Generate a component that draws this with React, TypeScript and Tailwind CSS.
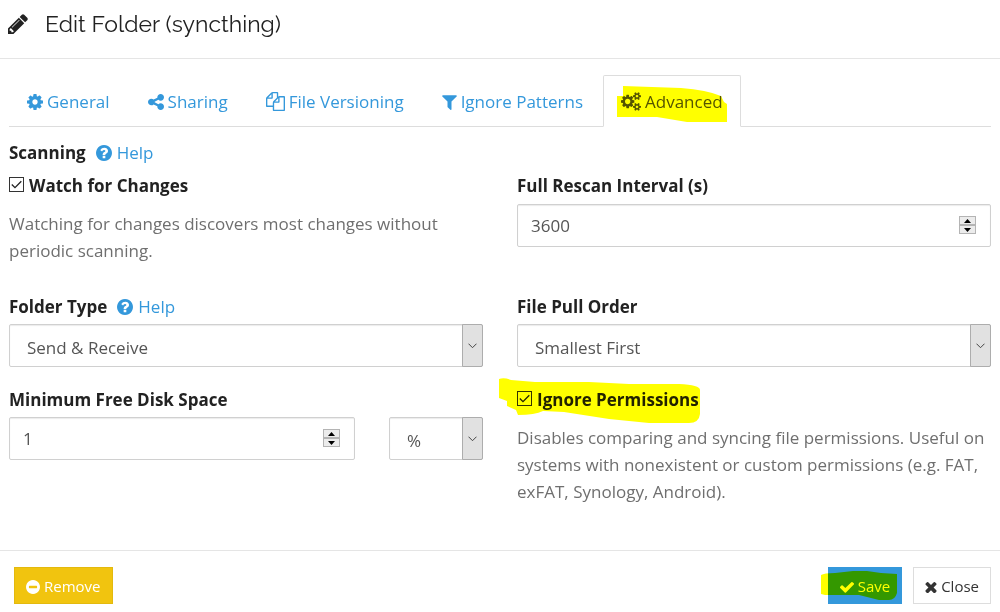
import { useState } from "react";
import type { ReactNode } from "react";

const icons = {
  pencil:
    "M491 1536l91-91-235-235-91 91v107h128v128h107zm523-928q0-22-22-22-10 0-17 7l-542 542q-7 7-7 17 0 22 22 22 10 0 17-7l542-542q7-7 7-17zm-54-192l416 416-832 832h-416v-416zm683 96q0 53-37 90l-166 166-416-416 166-165q36-38 90-38 53 0 91 38l235 234q37 39 37 91z",
  cog: "M1152 896q0-106-75-181t-181-75-181 75-75 181 75 181 181 75 181-75 75-181zm512-109v222q0 12-8 23t-20 13l-185 28q-19 54-39 91 35 50 107 138 10 12 10 25t-9 23q-27 37-99 108t-94 71q-12 0-26-9l-138-108q-44 23-91 38-16 136-29 186-7 28-36 28h-222q-14 0-24.5-8.5t-11.5-21.5l-28-184q-49-16-90-37l-141 107q-10 9-25 9-14 0-25-11-126-114-165-168-7-10-7-23 0-12 8-23 15-21 51-66.5t54-70.5q-27-50-41-99l-183-27q-13-2-21-12.5t-8-23.5v-222q0-12 8-23t19-13l186-28q14-46 39-92-40-57-107-138-10-12-10-24 0-10 9-23 26-36 98.5-107.5t94.5-71.5q13 0 26 10l138 107q44-23 91-38 16-136 29-186 7-28 36-28h222q14 0 24.5 8.5t11.5 21.5l28 184q49 16 90 37l142-107q9-9 24-9 13 0 25 10 129 119 165 170 7 8 7 22 0 12-8 23-15 21-51 66.5t-54 70.5q26 50 41 98l183 28q13 2 21 12.5t8 23.5z",
  share:
    "M1344 1024q133 0 226.5 93.5t93.5 226.5-93.5 226.5-226.5 93.5-226.5-93.5-93.5-226.5q0-12 2-34l-360-180q-92 86-218 86-133 0-226.5-93.5t-93.5-226.5 93.5-226.5 226.5-93.5q126 0 218 86l360-180q-2-22-2-34 0-133 93.5-226.5t226.5-93.5 226.5 93.5 93.5 226.5-93.5 226.5-226.5 93.5q-126 0-218-86l-360 180q2 22 2 34t-2 34l360 180q92-86 218-86z",
  files:
    "M1696 384q40 0 68 28t28 68v1216q0 40-28 68t-68 28h-960q-40 0-68-28t-28-68v-288h-544q-40 0-68-28t-28-68v-672q0-40 20-88t48-76l408-408q28-28 76-48t88-20h416q40 0 68 28t28 68v328q68-40 128-40h416zm-544 213l-299 299h299v-299zm-640-384l-299 299h299v-299zm196 647l316-316v-416h-384v416q0 40-28 68t-68 28h-416v640h512v-256q0-40 20-88t48-76zm956 804v-1152h-384v416q0 40-28 68t-68 28h-416v640h896z",
  filter:
    "M1595 295q17 41-14 70l-493 493v742q0 42-39 59-13 5-25 5-27 0-45-19l-256-256q-19-19-19-45v-486l-493-493q-31-29-14-70 17-39 59-39h1280q42 0 59 39z",
  cogs: "M896 896q0-106-75-181t-181-75-181 75-75 181 75 181 181 75 181-75 75-181zm768 512q0-52-38-90t-90-38-90 38-38 90q0 53 37.5 90.5t90.5 37.5 90.5-37.5 37.5-90.5zm0-1024q0-52-38-90t-90-38-90 38-38 90q0 53 37.5 90.5t90.5 37.5 90.5-37.5 37.5-90.5zm-384 421v185q0 10-7 19.5t-16 10.5l-155 24q-11 35-32 76 34 48 90 115 7 11 7 20 0 12-7 19-23 30-82.5 89.5t-78.5 59.5q-11 0-21-7l-115-90q-37 19-77 31-11 108-23 155-7 24-30 24h-186q-11 0-20-7.5t-10-17.5l-23-153q-34-10-75-31l-118 89q-7 7-20 7-11 0-21-8-144-133-144-160 0-9 7-19 10-14 41-53t47-61q-23-44-35-82l-152-24q-10-1-17-9.5t-7-19.5v-185q0-10 7-19.5t16-10.5l155-24q11-35 32-76-34-48-90-115-7-11-7-20 0-12 7-20 22-30 82-89t79-59q11 0 21 7l115 90q34-18 77-32 11-108 23-154 7-24 30-24h186q11 0 20 7.5t10 17.5l23 153q34 10 75 31l118-89q8-7 20-7 11 0 21 8 144 133 144 160 0 8-7 19-12 16-42 54t-45 60q23 48 34 82l152 23q10 2 17 10.5t7 19.5zm640 533v140q0 16-149 31-12 27-30 52 51 113 51 138 0 4-4 7-122 71-124 71-8 0-46-47t-52-68q-20 2-30 2t-30-2q-14 21-52 68t-46 47q-2 0-124-71-4-3-4-7 0-25 51-138-18-25-30-52-149-15-149-31v-140q0-16 149-31 13-29 30-52-51-113-51-138 0-4 4-7 4-2 35-20t59-34 30-16q8 0 46 46.5t52 67.5q20-2 30-2t30 2q51-71 92-112l6-2q4 0 124 70 4 3 4 7 0 25-51 138 17 23 30 52 149 15 149 31zm0-1024v140q0 16-149 31-12 27-30 52 51 113 51 138 0 4-4 7-122 71-124 71-8 0-46-47t-52-68q-20 2-30 2t-30-2q-14 21-52 68t-46 47q-2 0-124-71-4-3-4-7 0-25 51-138-18-25-30-52-149-15-149-31v-140q0-16 149-31 13-29 30-52-51-113-51-138 0-4 4-7 4-2 35-20t59-34 30-16q8 0 46 46.5t52 67.5q20-2 30-2t30 2q51-71 92-112l6-2q4 0 124 70 4 3 4 7 0 25-51 138 17 23 30 52 149 15 149 31z",
  question:
    "M1024 1376v-192q0-14-9-23t-23-9h-192q-14 0-23 9t-9 23v192q0 14 9 23t23 9h192q14 0 23-9t9-23zm256-672q0-88-55.5-163t-138.5-116-170-41q-243 0-371 213-15 24 8 42l132 100q7 6 19 6 16 0 25-12 53-68 86-92 34-24 86-24 48 0 85.5 26t37.5 59q0 38-20 61t-68 45q-63 28-115.5 86.5t-52.5 125.5v36q0 14 9 23t23 9h192q14 0 23-9t9-23q0-19 21.5-49.5t54.5-49.5q32-18 49-28.5t46-35 44.5-48 28-60.5 12.5-81zm384 192q0 209-103 385.5t-279.5 279.5-385.5 103-385.5-103-279.5-279.5-103-385.5 103-385.5 279.5-279.5 385.5-103 385.5 103 279.5 279.5 103 385.5z",
  minus:
    "M1344 960v-128q0-26-19-45t-45-19h-768q-26 0-45 19t-19 45v128q0 26 19 45t45 19h768q26 0 45-19t19-45zm320-64q0 209-103 385.5t-279.5 279.5-385.5 103-385.5-103-279.5-279.5-103-385.5 103-385.5 279.5-279.5 385.5-103 385.5 103 279.5 279.5 103 385.5z",
  check:
    "M1671 566q0 40-28 68l-724 724-136 136q-28 28-68 28t-68-28l-136-136-362-362q-28-28-28-68t28-68l136-136q28-28 68-28t68 28l294 295 656-657q28-28 68-28t68 28l136 136q28 28 28 68z",
  times:
    "M1490 1322q0 40-28 68l-136 136q-28 28-68 28t-68-28l-294-294-294 294q-28 28-68 28t-68-28l-136-136q-28-28-28-68t28-68l294-294-294-294q-28-28-28-68t28-68l136-136q28-28 68-28t68 28l294 294 294-294q28-28 68-28t68 28l136 136q28 28 28 68t-28 68l-294 294 294 294q28 28 28 68z",
};

interface IconProps {
  name: keyof typeof icons;
  box?: string;
  className: string;
}

function Icon({ name, box = "128 128 1536 1536", className }: IconProps) {
  return (
    <svg
      viewBox={box}
      fill="currentColor"
      aria-hidden="true"
      className={"shrink-0 " + className}
    >
      <path d={icons[name]} />
    </svg>
  );
}

// marker pen stroke laid over the text of its parent
function Marker({
  points,
  className,
}: {
  points: string;
  className: string;
}) {
  return (
    <svg
      aria-hidden="true"
      className={
        "pointer-events-none absolute overflow-visible mix-blend-multiply " +
        className
      }
    >
      <path d={points} fill="#ffff00" />
    </svg>
  );
}

function HelpLink() {
  return (
    <a href="#help" className="flex items-center gap-[5px] text-[#3498db]">
      <Icon name="question" className="size-4" />
      Help
    </a>
  );
}

function NumberField({
  id,
  value,
  onChange,
}: {
  id: string;
  value: number;
  onChange: (value: number) => void;
}) {
  return (
    <div className="relative flex-1">
      <input
        id={id}
        type="number"
        value={value}
        onChange={(e) => onChange(Number(e.target.value))}
        className="block h-[43px] w-full appearance-none rounded-xs border border-[#d0d0d0] bg-white px-[13px] text-[#555] shadow-[inset_0_1px_1px_rgba(0,0,0,0.08)] outline-none [appearance:textfield] [&::-webkit-inner-spin-button]:appearance-none"
      />
      <div className="absolute top-[12px] right-[15px] flex flex-col">
        <button
          type="button"
          aria-label="Increase"
          onClick={() => onChange(value + 1)}
          className="flex h-[9px] w-[17px] items-center justify-center border border-[#b4b4b4] bg-[#ececec]"
        >
          <svg viewBox="0 0 7 4" className="h-1 w-[7px]">
            <path d="M0 4L3.500 0L7 4z" />
          </svg>
        </button>
        <button
          type="button"
          aria-label="Decrease"
          onClick={() => onChange(value - 1)}
          className="flex h-[9px] w-[17px] items-center justify-center border border-[#b4b4b4] bg-[#ececec]"
        >
          <svg viewBox="0 0 7 4" className="h-1 w-[7px]">
            <path d="M0 0L3.500 4L7 0z" />
          </svg>
        </button>
      </div>
    </div>
  );
}

function SelectField({
  id,
  label,
  options,
  className = "w-full",
}: {
  id: string;
  label?: string;
  options: string[];
  className?: string;
}) {
  return (
    <div className={"relative " + className}>
      <select
        id={id}
        aria-label={label}
        className="block h-[43px] w-full appearance-none rounded-xs border border-[#d0d0d0] bg-white pt-[3px] pr-5 pl-[17px] text-[#555] shadow-[inset_0_1px_1px_rgba(0,0,0,0.08)] outline-none"
      >
        {options.map((option) => (
          <option key={option}>{option}</option>
        ))}
      </select>
      <span className="pointer-events-none absolute inset-y-0 right-0 flex w-[21px] items-center justify-center rounded-r-xs border border-[#adadad] bg-[#e1e1e1]">
        <svg
          viewBox="0 0 9 6"
          fill="none"
          stroke="#444"
          className="h-[6px] w-[9px]"
        >
          <path d="M0.500 0.700L4.500 4.700L8.500 0.700" />
        </svg>
      </span>
    </div>
  );
}

function CheckField({
  id,
  children,
}: {
  id: string;
  children: ReactNode;
}) {
  const [checked, setChecked] = useState(true);

  return (
    <div className="flex h-[27px] items-start gap-[5px]">
      <span className="relative mt-[5px] size-[15px]">
        <input
          id={id}
          type="checkbox"
          checked={checked}
          onChange={(e) => setChecked(e.target.checked)}
          className="block size-[15px] appearance-none border border-[#333] bg-white"
        />
        {checked && (
          <svg
            viewBox="0 0 15 15"
            fill="none"
            stroke="#222"
            strokeWidth="1.300"
            className="pointer-events-none absolute inset-0 size-[15px]"
          >
            <path d="M2.800 7.500L6 10.700L12.300 4.300" />
          </svg>
        )}
      </span>
      <label htmlFor={id} className="font-bold text-[#222]">
        {children}
      </label>
    </div>
  );
}

const tab =
  "flex h-[51px] items-center gap-1 border border-transparent px-[17px] pt-[2px] text-[#3498db]";

export default function App() {
  const [rescan, setRescan] = useState(3600);
  const [minFree, setMinFree] = useState(1);

  return (
    <form
      onSubmit={(e) => e.preventDefault()}
      className="isolate bg-white font-['Open_Sans','Noto_Sans',sans-serif] text-[17px] leading-[27px] text-[#6f6f6f]"
    >
      <header className="flex h-[59px] items-center gap-[17px] border-b border-[#e5e5e5] px-2 pb-[11px] text-[#222]">
        <Icon name="pencil" className="size-5" />
        <h1 className="font-['Raleway','Lato',sans-serif] text-[23px] font-normal">
          Edit Folder (syncthing)
        </h1>
      </header>

      <main className="px-[9px] pt-4">
        <nav className="flex gap-[2px] border-b border-[#ddd]">
          <a href="#general" className={tab}>
            <Icon name="cog" className="size-4" />
            General
          </a>
          <a href="#sharing" className={tab}>
            <Icon name="share" className="size-4" />
            Sharing
          </a>
          <a href="#versioning" className={tab}>
            <Icon name="files" box="0 0 1792 1792" className="size-[19px]" />
            File Versioning
          </a>
          <a href="#patterns" className={tab}>
            <Icon name="filter" box="192 128 1408 1536" className="h-4 w-[15px]" />
            Ignore Patterns
          </a>
          <a
            href="#advanced"
            aria-current="page"
            className="relative -mb-px flex h-[52px] items-center gap-1 rounded-t-xs border border-[#ddd] border-b-white bg-white px-[17px] pt-px text-[#555]"
          >
            <Icon name="cogs" box="0 0 1920 1792" className="h-[19px] w-5" />
            Advanced
            <Marker
              className="top-[8px] left-[13px] h-[40px] w-[112px]"
              points="M6 2L64 4Q90 6 104 12L107 18L110 20V38H70L40 33H0V12H6Z"
            />
          </a>
        </nav>

        <div className="mt-3 flex items-center gap-[10px]">
          <span className="font-bold text-[#222]">Scanning</span>
          <HelpLink />
        </div>

        <div className="mt-[6px] grid grid-cols-2 gap-x-[34px]">
          <div>
            <CheckField id="watch">Watch for Changes</CheckField>
            <p className="mt-[11px]">
              Watching for changes discovers most changes without periodic
              scanning.
            </p>
          </div>
          <div>
            <label htmlFor="rescan" className="mb-[5px] block font-bold text-[#222]">
              Full Rescan Interval (s)
            </label>
            <NumberField id="rescan" value={rescan} onChange={setRescan} />
          </div>
        </div>

        <div className="mt-[29px] grid grid-cols-2 gap-x-[34px] gap-y-[19px]">
          <div>
            <div className="mb-1 flex items-center gap-[10px]">
              <label htmlFor="type" className="font-bold text-[#222]">
                Folder Type
              </label>
              <HelpLink />
            </div>
            <SelectField
              id="type"
              options={["Send & Receive", "Send Only", "Receive Only"]}
            />
          </div>
          <div>
            <label htmlFor="order" className="mb-1 block font-bold text-[#222]">
              File Pull Order
            </label>
            <SelectField
              id="order"
              options={["Smallest First", "Largest First", "Random"]}
            />
          </div>
          <div>
            <label htmlFor="minfree" className="mb-1 block font-bold text-[#222]">
              Minimum Free Disk Space
            </label>
            <div className="flex gap-[34px]">
              <NumberField id="minfree" value={minFree} onChange={setMinFree} />
              <SelectField
                id="unit"
                label="Unit"
                options={["%", "kB", "MB", "GB"]}
                className="w-[94px]"
              />
            </div>
          </div>
          <div>
            <div className="relative">
              <CheckField id="ignore">Ignore Permissions</CheckField>
              <Marker
                className="-top-[8px] -left-[18px] h-[46px] w-[202px]"
                points="M0 1Q5 -1 12 2L36 4H90L130 6H180Q201 7 201 12V36Q200 45 190 45H150L110 41L65 34L44 33Q36 37 19 37L17 32L8 28V23L0 20Z"
              />
            </div>
            <p className="mt-[11px]">
              Disables comparing and syncing file permissions. Useful on
              systems with nonexistent or custom permissions (e.g. FAT, exFAT,
              Synology, Android).
            </p>
          </div>
        </div>
      </main>

      <footer className="mt-[45px] flex items-center gap-[11px] border-t border-[#e5e5e5] pt-4 pr-[9px] pb-2 pl-[14px] text-[15px]">
        <button
          type="button"
          className="mr-auto flex h-[37px] items-center gap-1 border border-[#e3b90e] bg-[#f1c40f] px-[11px] pt-[2px] text-white"
        >
          <Icon name="minus" className="size-[14px]" />
          Remove
        </button>
        <button
          type="submit"
          className="relative flex h-[37px] items-center gap-1 bg-[#3498db] px-3 pt-[2px] text-white"
        >
          <Icon name="check" className="size-[14px]" />
          Save
          <Marker
            className="top-[4px] -left-[7px] h-[30px] w-[77px]"
            points="M0 4Q3 2 14 2L32 0H46L60 2L76 3V22Q74 29 68 29H58L38 24H4L0 23Z"
          />
        </button>
        <button
          type="button"
          className="flex h-[37px] items-center gap-1 border border-[#ddd] bg-white px-[11px] pt-[2px] text-[#333]"
        >
          <Icon name="times" box="256 256 1280 1280" className="size-3" />
          Close
        </button>
      </footer>
    </form>
  );
}
